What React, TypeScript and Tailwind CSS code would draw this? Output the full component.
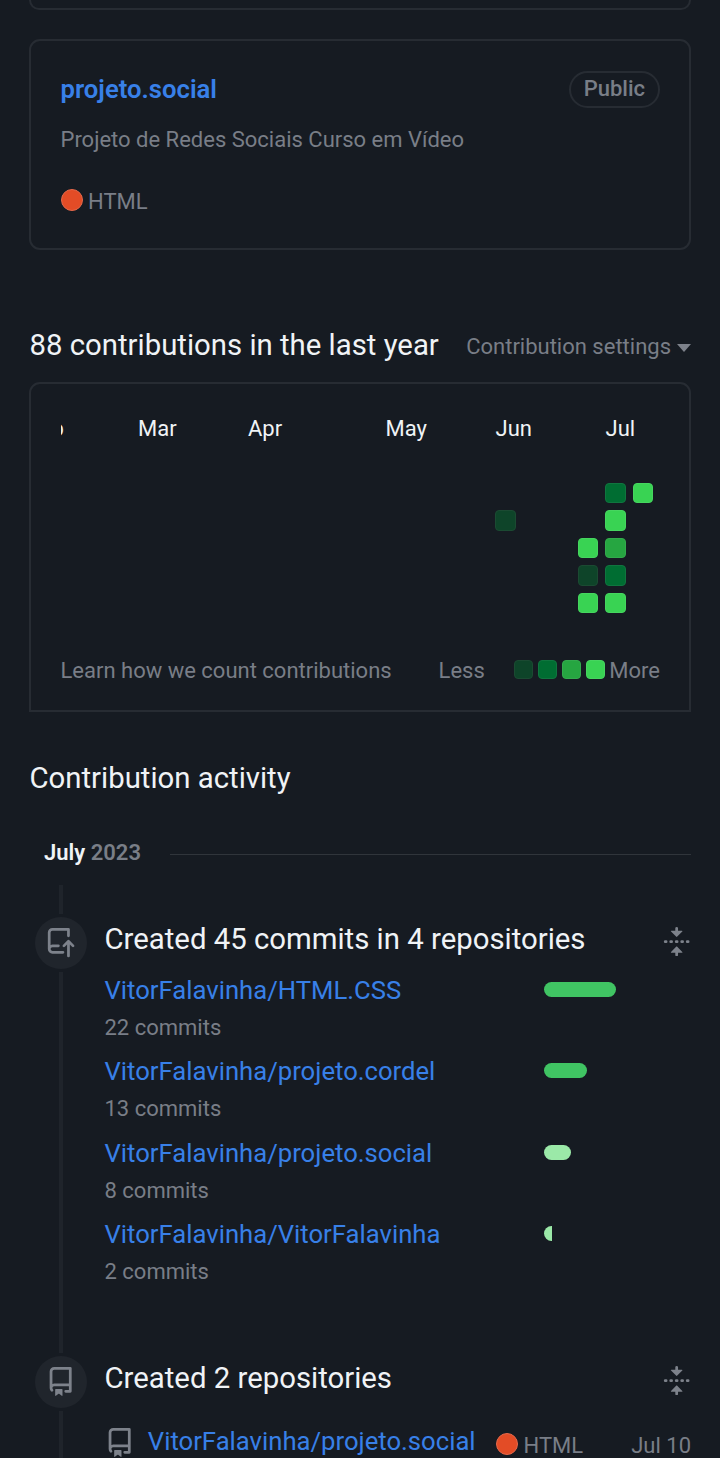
import type { ReactNode } from "react";

const LEVELS = [
  "",
  "bg-[#0e4429] border-[#1b4a32]",
  "bg-[#006d32] border-[#10753f]",
  "bg-[#26a641] border-[#33aa4d]",
  "bg-[#39d353] border-[#46d55f]",
];

const MONTHS = [
  { label: "Feb", col: "col-start-1" },
  { label: "Mar", col: "col-start-5" },
  { label: "Apr", col: "col-start-9" },
  { label: "May", col: "col-start-14" },
  { label: "Jun", col: "col-start-18" },
  { label: "Jul", col: "col-start-22" },
];

const WEEKS = 23;
const DAYS: Record<number, number>[] = [
  { 21: 2, 22: 4 },
  { 17: 1, 21: 4 },
  { 20: 4, 21: 3 },
  { 20: 1, 21: 2 },
  { 20: 4, 21: 4 },
];

const COMMITS = [
  { name: "VitorFalavinha/HTML.CSS", count: "22 commits", bar: "w-[72px] rounded-full bg-[#40c463]" },
  { name: "VitorFalavinha/projeto.cordel", count: "13 commits", bar: "w-[43px] rounded-full bg-[#40c463]" },
  { name: "VitorFalavinha/projeto.social", count: "8 commits", bar: "w-[27px] rounded-full bg-[#9be9a8]" },
  { name: "VitorFalavinha/VitorFalavinha", count: "2 commits", bar: "w-[7.5px] rounded-l-full bg-[#9be9a8]" },
];

function Icon({ d, className = "" }: { d: string; className?: string }) {
  return (
    <svg viewBox="0 0 16 16" className={`size-[29.33px] shrink-0 fill-current ${className}`}>
      <path d={d} />
    </svg>
  );
}

const PUSH =
  "M1 2.5A2.5 2.5 0 0 1 3.5 0h8.75a.75.75 0 0 1 .75.75v3.5a.75.75 0 0 1-1.5 0V1.5h-8a1 1 0 0 0-1 1v6.708A2.493 2.493 0 0 1 3.5 9h3.25a.75.75 0 0 1 0 1.5H3.5a1 1 0 0 0 0 2h5.75a.75.75 0 0 1 0 1.5H3.5A2.5 2.5 0 0 1 1 11.5Zm13.23 7.79h-.001l-1.224-1.224v6.184a.75.75 0 0 1-1.5 0V9.066L10.28 10.29a.75.75 0 0 1-1.06-1.061l2.505-2.504a.75.75 0 0 1 1.06 0L15.29 9.23a.751.751 0 0 1-.018 1.042.751.751 0 0 1-1.042.018Z";
const REPO =
  "M2 2.5A2.5 2.5 0 0 1 4.5 0h8.75a.75.75 0 0 1 .75.75v12.5a.75.75 0 0 1-.75.75h-2.5a.75.75 0 0 1 0-1.5h1.75v-2h-8a1 1 0 0 0-.714 1.7.75.75 0 1 1-1.072 1.05A2.495 2.495 0 0 1 2 11.5Zm10.5-1h-8a1 1 0 0 0-1 1v6.708A2.486 2.486 0 0 1 4.5 9h8ZM5 12.25a.25.25 0 0 1 .25-.25h3.5a.25.25 0 0 1 .25.25v3.25a.25.25 0 0 1-.4.2l-1.45-1.087a.249.249 0 0 0-.3 0L5.4 15.7a.25.25 0 0 1-.4-.2Z";
const FOLD =
  "M10.896 2H8.75V.75a.75.75 0 0 0-1.5 0V2H5.104a.25.25 0 0 0-.177.427l2.896 2.896a.25.25 0 0 0 .354 0l2.896-2.896A.25.25 0 0 0 10.896 2ZM8.75 15.25a.75.75 0 0 1-1.5 0V14H5.104a.25.25 0 0 1-.177-.427l2.896-2.896a.25.25 0 0 1 .354 0l2.896 2.896a.25.25 0 0 1-.177.427H8.75v1.25Zm-6.5-6.5a.75.75 0 0 0 0-1.5h-.5a.75.75 0 0 0 0 1.5h.5ZM6 8a.75.75 0 0 1-.75.75h-.5a.75.75 0 0 1 0-1.5h.5A.75.75 0 0 1 6 8Zm2.25.75a.75.75 0 0 0 0-1.5h-.5a.75.75 0 0 0 0 1.5h.5ZM12 8a.75.75 0 0 1-.75.75h-.5a.75.75 0 0 1 0-1.5h.5A.75.75 0 0 1 12 8Zm2.25.75a.75.75 0 0 0 0-1.5h-.5a.75.75 0 0 0 0 1.5h.5Z";

function Language() {
  return (
    <span className="flex items-center gap-[5.5px]">
      <span className="mb-[1px] size-[22px] rounded-full border border-[#e5694b] bg-[#e34c26]" />
      <span className="pt-[2px]">HTML</span>
    </span>
  );
}

function TimelineItem({ icon, title, children }: { icon: string; title: string; children: ReactNode }) {
  return (
    <section className="flex">
      <div className="flex w-[52px] shrink-0 flex-col items-center">
        <div className="my-[3px] flex size-[52px] shrink-0 items-center justify-center rounded-full bg-[#20252c] text-[#7d828b]">
          <Icon d={icon} />
        </div>
        <div className="w-1 grow bg-[#1f242b]" />
      </div>
      <div className="ml-[18px] grow">
        <div className="flex h-[50px] items-center justify-between">
          <h3 className="text-[29.33px] leading-[44px] text-[#f0f3f6]">{title}</h3>
          <Icon d={FOLD} className="mt-[5px] text-[#7d828b]" />
        </div>
        {children}
      </div>
    </section>
  );
}

export default function App() {
  return (
    <main className="h-[1458px] w-[720px] overflow-hidden bg-[#161b22] pr-[29px] pl-[29px] font-['Roboto',sans-serif] text-[22px] leading-[33px] text-[#797e87]">
      <div className="h-[10px] rounded-b-[11px] border-2 border-t-0 border-[#272c33]" />

      <article className="mt-[29px] h-[211px] rounded-[11px] border-2 border-[#272c33] px-[29.5px] pt-[29px]">
        <div className="flex h-[38px] items-center justify-between">
          <a className="text-[25.67px] font-semibold text-[#3880e8]">projeto.social</a>
          <span className="flex h-[37px] items-center rounded-full border-2 border-[#272c33] px-[12.5px] pb-[1px] font-medium">
            Public
          </span>
        </div>
        <p className="mt-[15px]">Projeto de Redes Sociais Curso em Vídeo</p>
        <div className="mt-[27px]">
          <Language />
        </div>
      </article>

      <div className="mt-[73px] flex h-[44px] items-center justify-between">
        <h2 className="pl-[0.5px] text-[29.33px] text-[#f0f3f6]">88 contributions in the last year</h2>
        <div className="flex items-center gap-[6px] pt-[3px]">
          <span>Contribution settings</span>
          <span className="mt-[3px] border-x-[7px] border-t-[8px] border-x-transparent border-t-[#7d828b]" />
        </div>
      </div>

      <section className="mt-[15px] h-[330px] rounded-t-[11px] border-2 border-[#272c33] pr-[29px] pl-[29.5px] pt-[28px]">
        <div className="overflow-hidden">
          <div className="-ml-[33px] w-[633px]">
            <div className="grid grid-cols-[repeat(23,27.5px)] pl-[0.5px] text-[#f0f3f6]">
              {MONTHS.map((m) => (
                <span key={m.label} className={`w-0 ${m.col}`}>
                  {m.label}
                </span>
              ))}
            </div>
            <div className="mt-[37.5px] grid auto-rows-[27.5px] grid-cols-[repeat(23,27.5px)]">
              {DAYS.flatMap((row, r) =>
                Array.from({ length: WEEKS }, (_, c) => (
                  <span key={`${r}-${c}`}>
                    {row[c] ? (
                      <span className={`block size-[20.5px] rounded-[4px] border ${LEVELS[row[c]]}`} />
                    ) : null}
                  </span>
                )),
              )}
            </div>
          </div>
        </div>
        <div className="mt-[33.5px] flex items-center">
          <span>Learn how we count contributions</span>
          <span className="ml-auto">Less</span>
          <span className="mb-[2px] ml-[29px] flex gap-[5px]">
            {[1, 2, 3, 4].map((n) => (
              <span key={n} className={`size-[19px] rounded-[4px] border ${LEVELS[n]}`} />
            ))}
          </span>
          <span className="ml-[4.5px]">More</span>
        </div>
      </section>

      <h2 className="mt-[44px] pl-[0.5px] text-[29.33px] leading-[44px] text-[#f0f3f6]">Contribution activity</h2>

      <div className="mt-[36px] flex h-[33px] items-center pl-[15px] font-semibold">
        <span className="text-[#f0f3f6]">July</span>
        <span className="ml-[5.5px]">2023</span>
        <span className="mt-[4px] ml-[29px] h-px grow bg-[#30353b]" />
      </div>

      <div className="pl-[5.5px]">
        <div className="mt-[16px] ml-6 h-[29px] w-1 bg-[#1f242b]" />
        <TimelineItem icon={PUSH} title="Created 45 commits in 4 repositories">
          <ul className="flex h-[389px] flex-col gap-[3.4px] pt-[7px]">
            {COMMITS.map((c) => (
              <li key={c.name} className="flex h-[78px]">
                <div className="w-[439.5px]">
                  <a className="block text-[25.67px] leading-[38px] text-[#3880e8]">{c.name}</a>
                  <span className="block leading-[37px]">{c.count}</span>
                </div>
                <div className={`mt-[11px] h-[15px] ${c.bar}`} />
              </li>
            ))}
          </ul>
        </TimelineItem>
        <TimelineItem icon={REPO} title="Created 2 repositories">
          <div className="flex h-[60px] items-start pt-[20px]">
            <Icon d={REPO} className="mt-[5px] text-[#7d828b]" />
            <a className="ml-[14px] text-[25.67px] leading-[36px] text-[#3880e8]">VitorFalavinha/projeto.social</a>
            <div className="ml-[20.5px] pt-[4px]">
              <Language />
            </div>
            <time className="ml-auto pt-[6px]">Jul 10</time>
          </div>
        </TimelineItem>
      </div>
    </main>
  );
}
